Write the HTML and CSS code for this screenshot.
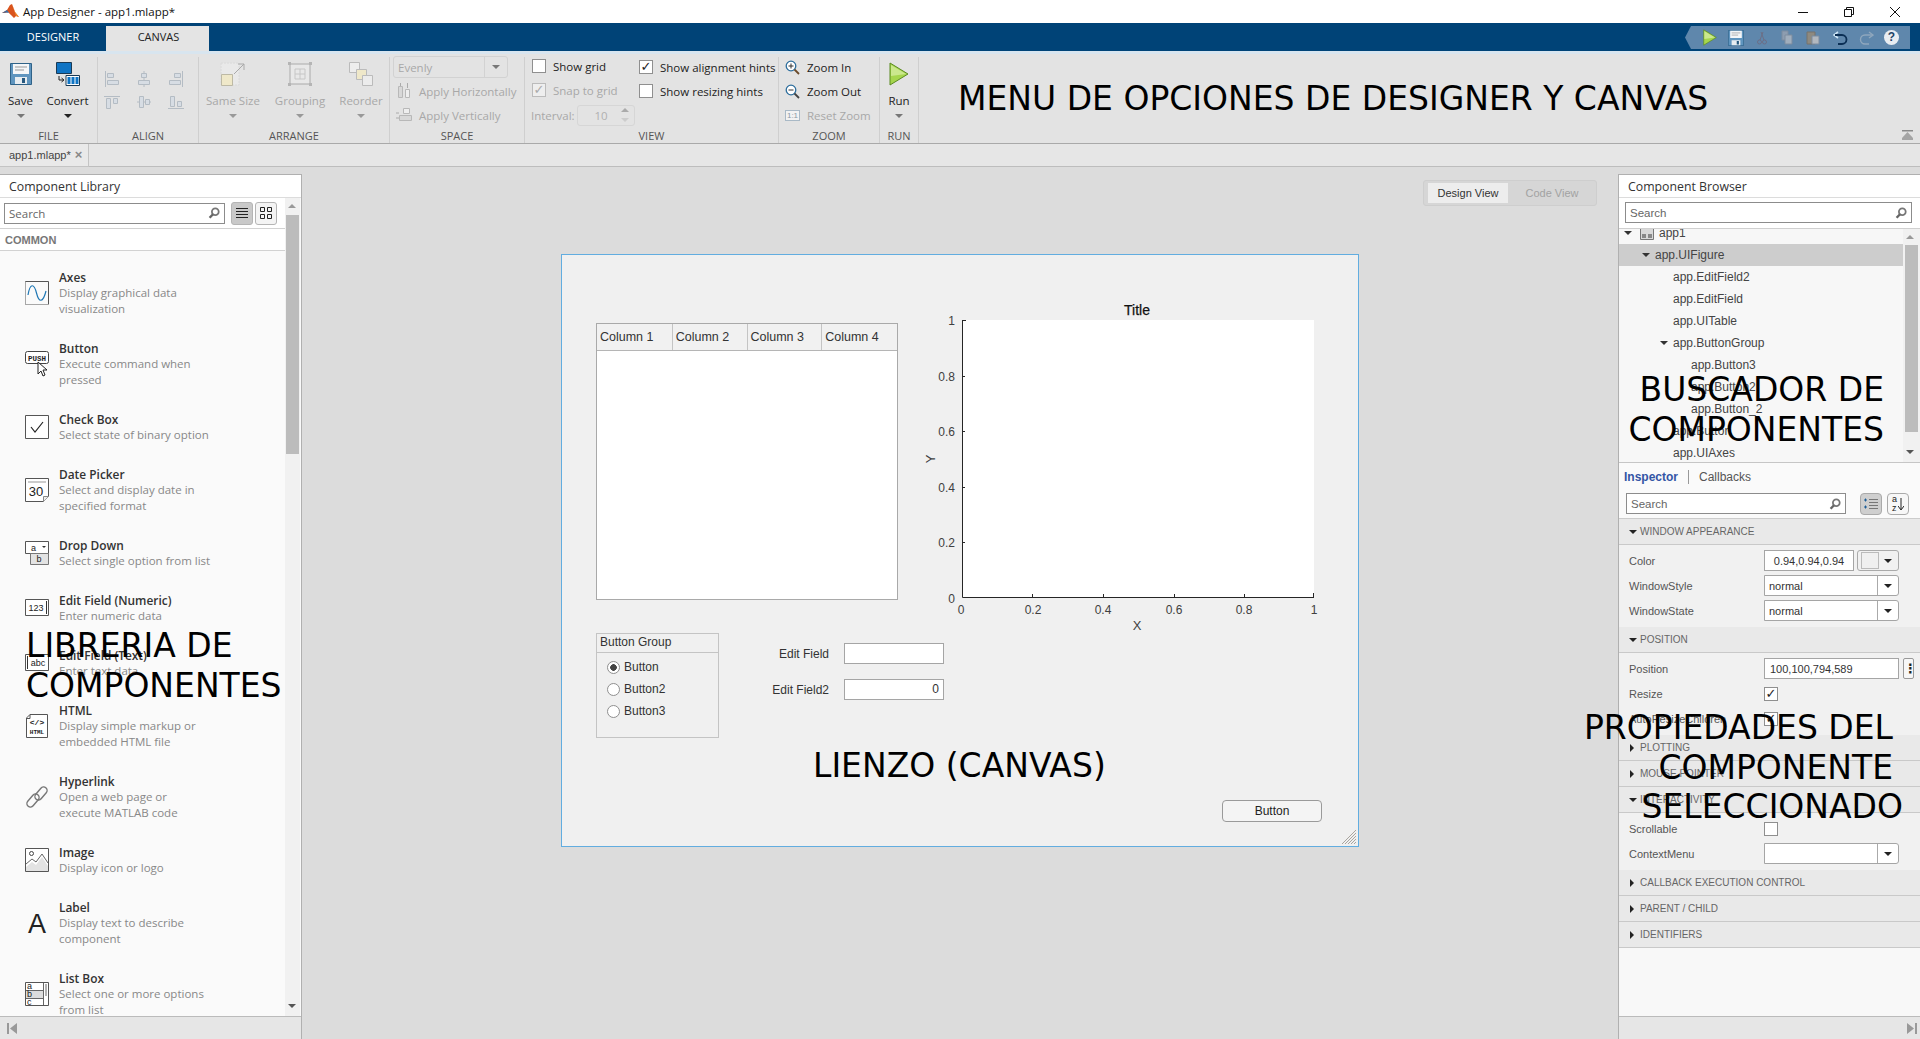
FILE: index.html
```html
<!DOCTYPE html>
<html lang="en">
<head>
    <meta charset="UTF-8">
    <title>App Designer - app1.mlapp*</title>
    <link rel="stylesheet" href="styles.css">
</head>
<body>

<svg class="defs" width="0" height="0">
    <defs>
        <symbol id="i-search" viewBox="0 0 12 12">
            <circle cx="7.3" cy="4.7" r="3.4" fill="none" stroke="#777" stroke-width="1.8"/>
            <path d="M5 7.2 1.6 10.8" stroke="#666" stroke-width="2.4"/>
        </symbol>
        <symbol id="i-save" viewBox="0 0 22 22">
            <path d="M.5.500h21v21H.5z" fill="#5f95bf" stroke="#2f6288"/>
            <path d="M3 1h16v10H3z" fill="#f4f6f8"/>
            <path d="M5 4h12M5 7h9" stroke="#999"/>
            <path d="M5 14h12v7H5z" fill="#e8edf1"/>
            <path d="M12 15h3v5h-3z" fill="#27597f"/>
        </symbol>
        <symbol id="i-play" viewBox="0 0 20 24">
            <path d="M1 1 19 12 1 23z" fill="#a6d64d" stroke="#5b8a22"/>
            <path d="M2 3 17 12 2 14z" fill="#cbe88d"/>
        </symbol>
    </defs>
</svg>

<header class="titlebar">
    <svg class="logo" width="17" height="15" viewBox="0 0 17 15">
        <path d="M0 9 5 6 8 1l2-1 3 8 4 5-3-1-2 2-3-3-3-3-3 1z" fill="#d9541e"/>
        <path d="M0 9 5 6l2 3-3-.5z" fill="#3b6ea5"/>
        <path d="m10 0 3 8 4 5-3-1-2-6z" fill="#f08a24"/>
    </svg>
    <span class="title-text">App Designer - app1.mlapp*</span>
    <div class="winbtns">
        <svg width="12" height="12" viewBox="0 0 12 12"><path d="M1 6.500h10" stroke="#111"/></svg>
        <svg width="12" height="12" viewBox="0 0 12 12"><path d="M1.500 3.500h7v7h-7zM3.500 3.500v-2h7v7h-2" fill="none" stroke="#111"/></svg>
        <svg width="12" height="12" viewBox="0 0 12 12"><path d="m1 1 10 10M11 1 1 11" stroke="#111"/></svg>
    </div>
</header>

<nav class="tabbar">
    <div class="tab">DESIGNER</div>
    <div class="tab tab-on">CANVAS</div>
    <div class="quick">
        <svg class="q-play" width="14" height="17"><use href="#i-play"/></svg>
        <svg class="q-save" width="16" height="16"><use href="#i-save"/></svg>
        <svg class="q-dim" width="12" height="14" viewBox="0 0 12 14"><path d="M7 1 4 9M5 1l3 8" stroke="#6c6f86" fill="none"/><circle cx="3.500" cy="11" r="2" fill="none" stroke="#6c6f86"/><circle cx="8.500" cy="11" r="2" fill="none" stroke="#6c6f86"/></svg>
        <svg class="q-dim" width="12" height="15" viewBox="0 0 12 15"><path d="M1 1h6v9H1z" fill="#8d9db0" stroke="#7c8c9f"/><path d="M4 5h7v9H4z" fill="#a0aebd" stroke="#7c8c9f"/></svg>
        <svg class="q-dim" width="14" height="15" viewBox="0 0 14 15"><path d="M1 2h8v12H1z" fill="#8e8a80" stroke="#77736c"/><path d="M6 6h7v8H6z" fill="#b2b8bf" stroke="#7c8c9f"/></svg>
        <svg class="q-undo" width="15" height="14" viewBox="0 0 15 14"><path d="M5 1 1 4l4 3" fill="none" stroke="#cfe6f7" stroke-width="1.600"/><path d="M2 4h7a4 4 0 0 1 0 9H5" fill="none" stroke="#0b2f55" stroke-width="1.800"/></svg>
        <svg class="q-redo" width="15" height="14" viewBox="0 0 15 14"><path d="M10 1l4 3-4 3" fill="none" stroke="#8fa7bd" stroke-width="1.400"/><path d="M13 4H6a4 4 0 0 0 0 9h4" fill="none" stroke="#8fa7bd" stroke-width="1.400"/></svg>
        <span class="q-help">?</span>
    </div>
</nav>

<section class="toolstrip">
    <div class="sec sec-file">
        <div class="sec-body">
            <div class="big big-save">
                <svg width="22" height="22"><use href="#i-save"/></svg>
                <span>Save</span><i class="caret caret-soft"></i>
            </div>
            <div class="big big-convert">
                <svg width="24" height="24" viewBox="0 0 24 24">
                    <path d="M.5.500h15v11H.5z" fill="#0f74c4" stroke="#1a3a55"/>
                    <path d="M10 13.500h13.500v10H10z" fill="#fff" stroke="#1a3a55"/>
                    <path d="M11.500 15h3v7h-3zM15.500 15h3v7h-3zM19.500 15h3v7h-3z" fill="#0f74c4"/>
                    <path d="M3 14v4h4M5.500 16 8 18l-2.500 2" fill="none" stroke="#222"/>
                </svg>
                <span>Convert</span><i class="caret"></i>
            </div>
        </div>
        <div class="sec-label">FILE</div>
    </div>

    <div class="sec sec-align">
        <div class="sec-body align-grid">
            <svg width="14" height="16" viewBox="0 0 14 16"><path d="M.5 0v16" stroke="#b4bcc4"/><path d="M2.500 2.500h6v4h-6zM2.500 9.500h11v4h-11z" fill="#d7dde4" stroke="#b4bcc4"/></svg>
            <svg width="14" height="16" viewBox="0 0 14 16"><path d="M7 0v16" stroke="#b4bcc4"/><path d="M4.500 2.500h5v4h-5zM1.500 9.500h11v4h-11z" fill="#d7dde4" stroke="#b4bcc4"/></svg>
            <svg width="14" height="16" viewBox="0 0 14 16"><path d="M13.500 0v16" stroke="#b4bcc4"/><path d="M5.500 2.500h6v4h-6zM.5 9.500h11v4H.5z" fill="#d7dde4" stroke="#b4bcc4"/></svg>
            <svg width="16" height="13" viewBox="0 0 16 13"><path d="M0 .5h16" stroke="#b4bcc4"/><path d="M2.500 2.500h4v10h-4zM9.500 2.500h4v5h-4z" fill="#d7dde4" stroke="#b4bcc4"/></svg>
            <svg width="14" height="14" viewBox="0 0 14 14"><path d="M0 7h14" stroke="#b4bcc4"/><path d="M2.500 1.500h4v11h-4zM8.500 4.500h4v5h-4z" fill="#d7dde4" stroke="#b4bcc4"/></svg>
            <svg width="16" height="13" viewBox="0 0 16 13"><path d="M0 12.500h16" stroke="#b4bcc4"/><path d="M2.500.5h4v10h-4zM9.500 5.500h4v5h-4z" fill="#d7dde4" stroke="#b4bcc4"/></svg>
        </div>
        <div class="sec-label">ALIGN</div>
    </div>

    <div class="sec sec-arrange">
        <div class="sec-body">
            <div class="big big-same dim">
                <svg width="26" height="24" viewBox="0 0 26 24">
                    <path d="M1 1h18v22H1z" fill="#e9e9e9" stroke="#dadada" stroke-dasharray="2 1"/>
                    <path d="M1.500 12.500h11v11h-11z" fill="#efe8c9" stroke="#bdb9a5"/>
                    <path d="M14 12 24 2M18 2h6v6" fill="none" stroke="#a9a9a9"/>
                </svg>
                <span>Same Size</span><i class="caret caret-soft"></i>
            </div>
            <div class="big big-group dim">
                <svg width="24" height="24" viewBox="0 0 24 24">
                    <path d="M2 2h20v20H2z" fill="#e8e8e8" stroke="#aaa"/>
                    <path d="M7 7h10v10H7zM12 7v10M7 12h10" fill="none" stroke="#c6c6c6"/>
                    <path d="M0 0h3v3H0zM21 0h3v3h-3zM0 21h3v3H0zM21 21h3v3h-3z" fill="#b5b5b5"/>
                </svg>
                <span>Grouping</span><i class="caret caret-soft"></i>
            </div>
            <div class="big big-reorder dim">
                <svg width="24" height="24" viewBox="0 0 24 24">
                    <path d="M.5.500h10v10H.5z" fill="#ededed" stroke="#bbb"/>
                    <path d="M7.500 7.500h10v10h-10z" fill="#efe8c9" stroke="#bbb"/>
                    <path d="M13.500 13.500h10v10h-10z" fill="#ececec" stroke="#bbb"/>
                </svg>
                <span>Reorder</span><i class="caret caret-soft"></i>
            </div>
        </div>
        <div class="sec-label">ARRANGE</div>
    </div>

    <div class="sec sec-space">
        <div class="sec-body stack">
            <div class="combo-evenly"><span>Evenly</span><b><i class="caret caret-soft"></i></b></div>
            <div class="tool-row dim">
                <svg width="16" height="16" viewBox="0 0 16 16"><path d="M4.500 0v3M11.500 0v5" stroke="#aaa"/><path d="M2.500 3.500h4v11h-4z" fill="#d8d8d8" stroke="#b8b8b8"/><path d="M9.500 6.500h4v8h-4z" fill="#eee" stroke="#b8b8b8"/></svg>
                <span>Apply Horizontally</span>
            </div>
            <div class="tool-row dim">
                <svg width="16" height="16" viewBox="0 0 16 16"><path d="M0 6h3M0 11h3" stroke="#aaa"/><path d="M7.500 1.500h6v5h-6z" fill="#eee" stroke="#b8b8b8"/><path d="M3.500 8.500h12v5h-12z" fill="#d8d8d8" stroke="#b8b8b8"/></svg>
                <span>Apply Vertically</span>
            </div>
        </div>
        <div class="sec-label">SPACE</div>
    </div>

    <div class="sec sec-view">
        <div class="sec-body view-cols">
            <div class="stack view-left">
                <label class="tool-row"><i class="cbx"></i><span>Show grid</span></label>
                <label class="tool-row dim"><i class="cbx cbx-dim">&#10003;</i><span>Snap to grid</span></label>
                <div class="tool-row dim row-interval">
                    <span>Interval:</span>
                    <div class="spin"><span>10</span><em></em></div>
                </div>
            </div>
            <div class="stack view-right">
                <label class="tool-row"><i class="cbx">&#10003;</i><span>Show alignment hints</span></label>
                <label class="tool-row"><i class="cbx"></i><span>Show resizing hints</span></label>
            </div>
        </div>
        <div class="sec-label">VIEW</div>
    </div>

    <div class="sec sec-zoom">
        <div class="sec-body stack">
            <div class="tool-row">
                <svg width="15" height="15" viewBox="0 0 15 15"><circle cx="6" cy="6" r="4.800" fill="#fff" stroke="#2c6d9c" stroke-width="1.300"/><path d="M3.500 6h5M6 3.500v5" stroke="#333"/><path d="m9.500 9.500 4.500 4.500" stroke="#6b4a2a" stroke-width="1.800"/></svg>
                <span>Zoom In</span>
            </div>
            <div class="tool-row">
                <svg width="15" height="15" viewBox="0 0 15 15"><circle cx="6" cy="6" r="4.800" fill="#fff" stroke="#2c6d9c" stroke-width="1.300"/><path d="M3.500 6h5" stroke="#333"/><path d="m9.500 9.500 4.500 4.500" stroke="#444" stroke-width="1.800"/></svg>
                <span>Zoom Out</span>
            </div>
            <div class="tool-row dim">
                <span class="one-one">1:1</span>
                <span>Reset Zoom</span>
            </div>
        </div>
        <div class="sec-label">ZOOM</div>
    </div>

    <div class="sec sec-run">
        <div class="sec-body">
            <div class="big big-run">
                <svg width="20" height="23"><use href="#i-play"/></svg>
                <span>Run</span><i class="caret caret-soft"></i>
            </div>
        </div>
        <div class="sec-label">RUN</div>
    </div>

    <svg class="collapse" width="11" height="11" viewBox="0 0 11 11"><path d="M0 .5h11" stroke="#8a8a8a" stroke-width="2"/><path d="M5.500 2 0 8v2h11V8z" fill="#a5a5a5"/></svg>
</section>

<div class="docbar">
    <div class="doctab">app1.mlapp*<span class="doc-x">&#215;</span></div>
</div>

<main class="workspace">

    <aside class="panel lib">
        <div class="panel-title">Component Library</div>
        <div class="lib-body">
            <div class="lib-main">
                <div class="lib-tools">
                    <div class="search search-lib">Search<svg width="12" height="12"><use href="#i-search"/></svg></div>
                    <div class="view-btn view-btn-on">
                        <svg width="12" height="12" viewBox="0 0 12 12"><path d="M0 1.500h12M0 4.500h12M0 7.500h12M0 10.500h12" stroke="#222"/></svg>
                    </div>
                    <div class="view-btn">
                        <svg width="12" height="12" viewBox="0 0 12 12"><path d="M.5.500h4v4h-4zM7.500.500h4v4h-4zM.5 7.500h4v4h-4zM7.500 7.500h4v4h-4z" fill="none" stroke="#222"/></svg>
                    </div>
                </div>
                <div class="lib-cat">COMMON</div>
                <div class="lib-list">
                    <div class="item">
                        <svg width="24" height="24" viewBox="0 0 24 24"><path d="M.5.500h23" stroke="#555"/><path d="M.5.500v23h23" fill="none" stroke="#555" stroke-dasharray="1 1"/><path d="M23.500.500v23" stroke="#555"/><path d="M3 14C5 2 9 2 11.500 12S18 22 21 10" fill="none" stroke="#1f77b4" stroke-width="1.200"/></svg>
                        <div class="item-text"><b>Axes</b><p>Display graphical data<br>visualization</p></div>
                    </div>
                    <div class="item">
                        <svg width="24" height="28" viewBox="0 0 24 28"><rect x=".5" y="1.500" width="23" height="12" rx="2" fill="#fff" stroke="#444"/><text x="12" y="10.500" class="ic-push">PUSH</text><path d="M13 12v12l3-3 2 5 2-1-2-5h4z" fill="#fff" stroke="#222"/></svg>
                        <div class="item-text"><b>Button</b><p>Execute command when<br>pressed</p></div>
                    </div>
                    <div class="item">
                        <svg width="24" height="24" viewBox="0 0 24 24"><path d="M.5.500h23v23H.5z" fill="#fff" stroke="#555"/><path d="m6 12 4 5 8-10" fill="none" stroke="#222" stroke-width="1.200"/></svg>
                        <div class="item-text"><b>Check Box</b><p>Select state of binary option</p></div>
                    </div>
                    <div class="item">
                        <svg width="24" height="24" viewBox="0 0 24 24"><path d="M.5.500h23v18l-5 5H.5z" fill="#fff" stroke="#555"/><path d="M3 4h18" stroke="#999"/><path d="M18.500 23.500v-5h5" fill="#eee" stroke="#888"/><text x="11" y="18" class="ic-date">30</text></svg>
                        <div class="item-text"><b>Date Picker</b><p>Select and display date in<br>specified format</p></div>
                    </div>
                    <div class="item">
                        <svg width="24" height="24" viewBox="0 0 24 24"><path d="M.5.500h23v12H.5z" fill="#fff" stroke="#555"/><path d="M5.500 12.500h18v11h-18z" fill="#e3e3e3" stroke="#777"/><text x="6" y="10" class="ic-small">a</text><path d="m17 5 2 2 2-2z" fill="#333"/><text x="11.500" y="21" class="ic-small">b</text></svg>
                        <div class="item-text"><b>Drop Down</b><p>Select single option from list</p></div>
                    </div>
                    <div class="item">
                        <svg width="24" height="24" viewBox="0 0 24 24"><path d="M.5 3.500h23v16H.5z" fill="#fff" stroke="#555"/><text x="11" y="15" class="ic-num">123</text><path d="M21.500 5v13" stroke="#333"/></svg>
                        <div class="item-text"><b>Edit Field (Numeric)</b><p>Enter numeric data</p></div>
                    </div>
                    <div class="item">
                        <svg width="24" height="24" viewBox="0 0 24 24"><path d="M.5 3.500h23v16H.5z" fill="#fff" stroke="#555"/><path d="M2.500 5v13" stroke="#333"/><text x="13" y="15" class="ic-num">abc</text></svg>
                        <div class="item-text"><b>Edit Field (Text)</b><p>Enter text data</p></div>
                    </div>
                    <div class="item">
                        <svg width="24" height="24" viewBox="0 0 24 24"><path d="M5 .5h17.500v23H1.500V4z" fill="#fff" stroke="#555"/><path d="M1.500 4.500H5V.5" fill="none" stroke="#555"/><text x="12" y="11" class="ic-html">&lt;/&gt;</text><text x="12" y="20" class="ic-html ic-html-sm">HTML</text></svg>
                        <div class="item-text"><b>HTML</b><p>Display simple markup or<br>embedded HTML file</p></div>
                    </div>
                    <div class="item">
                        <svg width="24" height="24" viewBox="0 0 24 24"><g fill="none" stroke="#777" stroke-width="1.400"><rect x="-3.500" y="-7.500" width="7" height="15" rx="3.500" transform="translate(8 15.500) rotate(40)"/><rect x="-3.500" y="-7.500" width="7" height="15" rx="3.500" transform="translate(16 8.500) rotate(40)"/></g></svg>
                        <div class="item-text"><b>Hyperlink</b><p>Open a web page or<br>execute MATLAB code</p></div>
                    </div>
                    <div class="item">
                        <svg width="24" height="24" viewBox="0 0 24 24"><path d="M.5.500h23v23H.5z" fill="#fff" stroke="#555"/><path d="m1 19 6-5 4 3 6-8 6 9v5H1z" fill="#e3e3e3"/><path d="m1 16 6-5 4 3 6-8 6 9" fill="none" stroke="#666"/><circle cx="6.500" cy="5.500" r="2" fill="none" stroke="#444"/></svg>
                        <div class="item-text"><b>Image</b><p>Display icon or logo</p></div>
                    </div>
                    <div class="item">
                        <svg width="24" height="24" viewBox="0 0 24 24"><text x="12" y="22" class="ic-label">A</text></svg>
                        <div class="item-text"><b>Label</b><p>Display text to describe<br>component</p></div>
                    </div>
                    <div class="item">
                        <svg width="24" height="24" viewBox="0 0 24 24"><path d="M.5.500h23v23H.5z" fill="#fff" stroke="#555"/><path d="M1 9h17v7H1z" fill="#ddd"/><path d="M1 8.500h17M1 16.500h17M18.500 1v22M21 2v12" stroke="#666"/><text x="2" y="7" class="ic-small">a</text><text x="2" y="15" class="ic-small">b</text><text x="2" y="22.500" class="ic-small">c</text></svg>
                        <div class="item-text"><b>List Box</b><p>Select one or more options<br>from list</p></div>
                    </div>
                </div>
            </div>
            <div class="vscroll vscroll-lib"><i class="arr-up"></i><div class="thumb"></div><i class="arr-down"></i></div>
        </div>
        <div class="panel-foot">
            <svg width="11" height="11" viewBox="0 0 11 11"><path d="M1 0h2v11H1zM11 0v11L4 5.500z" fill="#999"/></svg>
        </div>
    </aside>

    <div class="center">
        <div class="view-switch">
            <span class="vs vs-on">Design View</span>
            <span class="vs">Code View</span>
        </div>

        <div class="figure">
            <div class="ui-table">
                <div class="thead">
                    <span>Column 1</span><span>Column 2</span><span>Column 3</span><span>Column 4</span>
                </div>
            </div>

            <svg class="ui-axes" width="420" height="340" viewBox="0 -15 420 340">
                <rect x="46" y="5" width="352" height="277" fill="#fff"/>
                <path d="M46.500 5v277.500H398" fill="none" stroke="#262626"/>
                <path d="M46 5.500h4M46 61.500h3M46 116.500h3M46 172.500h3M46 227.500h3M116.500 282v-3M187.500 282v-3M258.500 282v-3M328.500 282v-3M397.500 282v-4" stroke="#262626"/>
                <text x="221" y="0" class="ax-title">Title</text>
                <g class="ax-y">
                    <text x="39" y="10">1</text><text x="39" y="66">0.8</text><text x="39" y="121">0.6</text>
                    <text x="39" y="177">0.4</text><text x="39" y="232">0.2</text><text x="39" y="288">0</text>
                </g>
                <g class="ax-x">
                    <text x="45" y="299">0</text><text x="117" y="299">0.2</text><text x="187" y="299">0.4</text>
                    <text x="258" y="299">0.6</text><text x="328" y="299">0.8</text><text x="398" y="299">1</text>
                    <text x="221" y="315" class="ax-name">X</text>
                </g>
                <text class="ax-name" transform="translate(19 144) rotate(-90)">Y</text>
            </svg>

            <div class="ui-group">
                <div class="group-title">Button Group</div>
                <div class="radio"><i class="dot dot-on"></i>Button</div>
                <div class="radio"><i class="dot"></i>Button2</div>
                <div class="radio"><i class="dot"></i>Button3</div>
            </div>

            <div class="ui-fields">
                <div class="ui-field"><label>Edit Field</label><div class="ui-input"></div></div>
                <div class="ui-field"><label>Edit Field2</label><div class="ui-input">0</div></div>
            </div>

            <div class="ui-button">Button</div>

            <svg class="grip" width="14" height="14" viewBox="0 0 14 14"><path d="M14 0 0 14M14 3 3 14M14 6 6 14M14 9l-5 5M14 12l-2 2" stroke="#a9a59f"/></svg>
        </div>
    </div>

    <aside class="panel browser">
        <div class="panel-title">Component Browser</div>
        <div class="browser-search">
            <div class="search">Search<svg width="12" height="12"><use href="#i-search"/></svg></div>
        </div>
        <div class="tree-wrap">
            <div class="tree">
                <div class="node lvl0"><i class="tw"></i><svg class="tree-ic" width="14" height="13" viewBox="0 0 14 13"><path d="M.5.500h13v12H.5z" fill="#d9d9d9" stroke="#777"/><path d="M2 7h4v4H2zM8 7h4v4H8z" fill="#888"/></svg>app1</div>
                <div class="node lvl1 node-on"><i class="tw"></i>app.UIFigure</div>
                <div class="node lvl2">app.EditField2</div>
                <div class="node lvl2">app.EditField</div>
                <div class="node lvl2">app.UITable</div>
                <div class="node has-tw"><i class="tw"></i>app.ButtonGroup</div>
                <div class="node lvl3">app.Button3</div>
                <div class="node lvl3">app.Button2</div>
                <div class="node lvl3">app.Button_2</div>
                <div class="node lvl2">app.Button</div>
                <div class="node lvl2">app.UIAxes</div>
            </div>
            <div class="vscroll vscroll-tree"><i class="arr-up"></i><div class="thumb"></div><i class="arr-down"></i></div>
        </div>

        <div class="insp-tabs">
            <span class="insp-on">Inspector</span><i class="insp-sep"></i><span>Callbacks</span>
        </div>
        <div class="insp-tools">
            <div class="search">Search<svg width="12" height="12"><use href="#i-search"/></svg></div>
            <div class="sort-btn sort-on">
                <svg width="14" height="14" viewBox="0 0 14 14"><path d="M5 2.500h9M5 5.500h9M5 8.500h9M5 11.500h9" stroke="#777"/><path d="M0 3h3M1.500 1.500v3M0 10h3M1.500 8.500v3" stroke="#1c5d96"/></svg>
            </div>
            <div class="sort-btn">
                <span class="az">a<br>z</span>
                <svg width="6" height="14" viewBox="0 0 6 14"><path d="M3 1v11M0 9l3 4 3-4" fill="none" stroke="#222"/></svg>
            </div>
        </div>

        <div class="props">
            <div class="sect-head open">WINDOW APPEARANCE</div>
            <div class="sect-body">
                <div class="prop"><label>Color</label>
                    <div class="val val-color">0.94,0.94,0.94</div>
                    <div class="color-btn"><i class="swatch"></i><i class="caret"></i></div>
                </div>
                <div class="prop"><label>WindowStyle</label>
                    <div class="val val-drop"><span>normal</span><b><i class="caret"></i></b></div>
                </div>
                <div class="prop"><label>WindowState</label>
                    <div class="val val-drop"><span>normal</span><b><i class="caret"></i></b></div>
                </div>
            </div>
            <div class="sect-head open">POSITION</div>
            <div class="sect-body">
                <div class="prop"><label>Position</label>
                    <div class="val val-pos">100,100,794,589</div>
                    <div class="dots">&#8942;</div>
                </div>
                <div class="prop"><label>Resize</label><i class="cbx">&#10003;</i></div>
                <div class="prop"><label>AutoResizeChildren</label><i class="cbx">&#10003;</i></div>
            </div>
            <div class="sect-head">PLOTTING</div>
            <div class="sect-head">MOUSE POINTER</div>
            <div class="sect-head open">INTERACTIVITY</div>
            <div class="sect-body">
                <div class="prop"><label>Scrollable</label><i class="cbx"></i></div>
                <div class="prop"><label>ContextMenu</label>
                    <div class="val val-drop"><span></span><b><i class="caret"></i></b></div>
                </div>
            </div>
            <div class="sect-head">CALLBACK EXECUTION CONTROL</div>
            <div class="sect-head">PARENT / CHILD</div>
            <div class="sect-head">IDENTIFIERS</div>
        </div>
        <div class="panel-foot foot-right">
            <svg width="11" height="11" viewBox="0 0 11 11"><path d="M8 0h2v11H8zM0 0v11l7-5.500z" fill="#999"/></svg>
        </div>
    </aside>
</main>

<div class="note note-menu">MENU DE OPCIONES DE DESIGNER Y CANVAS</div>
<div class="note note-lib">LIBRERIA DE<br>COMPONENTES</div>
<div class="note note-browser">BUSCADOR DE<br>COMPONENTES</div>
<div class="note note-canvas">LIENZO (CANVAS)</div>
<div class="note note-props">
    <div class="np1">PROPIEDADES DEL</div>
    <div class="np2">COMPONENTE</div>
    <div class="np3">SELECCIONADO</div>
</div>

</body>
</html>
```

FILE: styles.css
```css
*{
    box-sizing: border-box;
}
html,body{
    margin: 0;
    height: 100%;
}
body{
    width: 1920px;
    height: 1039px;
    overflow: hidden;
    position: relative;
    display: flex;
    flex-direction: column;
    background: #dcdcdc;
    font-family: "Open Sans", "Liberation Sans", sans-serif;
    font-size: 11.5px;
    color: #222;
}
p{
    margin: 0;
}
i,em{
    font-style: normal;
}
svg{
    display: block;
    flex: none;
}
.defs{
    position: absolute;
}

/* title bar */
.titlebar{
    height: 23px;
    flex: none;
    background: #fff;
    display: flex;
    align-items: center;
    padding-left: 2px;
    font-size: 11.5px;
    color: #111;
}
.title-text{
    margin-left: 4px;
}
.winbtns{
    margin-left: auto;
    display: flex;
    gap: 34px;
    padding-right: 19px;
}

/* tabs */
.tabbar{
    height: 28px;
    flex: none;
    background: #004377;
    display: flex;
    padding-top: 3px;
    position: relative;
}
.tab{
    width: 106px;
    padding-top: 3px;
    text-align: center;
    font-size: 11px;
    color: #fff;
}
.tab-on{
    width: 103px;
    padding-left: 2px;
    background: #e4e4e4;
    color: #222;
}
.quick{
    margin: 0 10px 2px auto;
    width: 225px;
    padding-left: 18px;
    display: flex;
    align-items: center;
    background: #5f87ac;
    clip-path: polygon(6px 0, 100% 0, 100% 100%, 6px 100%, 0 50%);
}
.q-play{
    margin-right: 11px;
}
.q-save{
    margin-right: 12px;
}
.quick .q-dim{
    margin-right: 13px;
}
.quick .q-undo{
    margin-right: 11px;
}
.quick .q-redo{
    margin-right: 10px;
}
.q-help{
    width: 15px;
    height: 15px;
    border-radius: 50%;
    background: #e9edf2;
    color: #1d4468;
    font: bold 12px/15px "Liberation Sans", sans-serif;
    text-align: center;
}

/* toolstrip */
.toolstrip{
    height: 93px;
    flex: none;
    background: #e3e3e3;
    border-top: 3px solid #d8e5ef;
    border-bottom: 1px solid #a9a9a9;
    display: flex;
    position: relative;
}
.sec{
    display: flex;
    flex-direction: column;
    border-right: 1px solid #cfcfcf;
    margin-top: 3px;
    flex: none;
}
.sec-file{width: 98px;}
.sec-align{width: 101px;}
.sec-arrange{width: 191px;}
.sec-space{width: 135px;}
.sec-view{width: 254px;}
.sec-zoom{width: 101px;}
.sec-run{width: 39px;}
.sec-body{
    flex: 1;
    display: flex;
    margin-top: -3px;
    min-height: 0;
}
.sec-label{
    height: 14px;
    line-height: 14px;
    text-align: center;
    font-size: 11px;
    color: #555;
}
.big{
    display: flex;
    flex-direction: column;
    align-items: center;
    padding-top: 8px;
}
.big svg{
    height: 24px;
}
.big span{
    margin-top: 7px;
    line-height: 16px;
    white-space: nowrap;
}
.big-save{width: 41px;}
.big-convert{width: 53px;}
.big-same{width: 68px;}
.big-group{width: 66px;}
.big-reorder{width: 56px;}
.big-run{width: 38px;}
.caret{
    display: block;
    width: 0;
    height: 0;
    border-left: 4px solid transparent;
    border-right: 4px solid transparent;
    border-top: 4px solid #222;
}
.big .caret{
    margin-top: 5px;
}
.caret-soft{
    border-top-color: #777;
}
.dim{
    color: #a8a8a8;
}
.dim .caret{
    border-top-color: #999;
}
.align-grid{
    display: grid;
    grid-template-columns: repeat(3, 32px);
    grid-template-rows: 24px 22px;
    justify-items: center;
    align-items: center;
    justify-content: center;
    align-content: start;
    padding: 13px 8px 0 0;
}
.stack{
    flex-direction: column;
    padding-top: 1px;
}
.tool-row{
    height: 24px;
    display: flex;
    align-items: center;
    gap: 7px;
    white-space: nowrap;
}
.sec-zoom .tool-row{
    padding-left: 6px;
}
.sec-space .tool-row{
    padding-left: 6px;
}
.combo-evenly{
    margin: 1px 0 1px 3px;
    width: 115px;
    height: 22px;
    border: 1px solid #d2d2d2;
    border-radius: 3px;
    display: flex;
    align-items: center;
    padding-left: 4px;
    color: #a8a8a8;
}
.combo-evenly span{
    flex: 1;
}
.combo-evenly b{
    width: 23px;
    height: 100%;
    border-left: 1px solid #d2d2d2;
    display: flex;
    align-items: center;
    justify-content: center;
}
.view-cols{
    padding-left: 7px;
}
.view-left{
    display: flex;
    width: 107px;
    padding-top: 0;
}
.view-right{
    display: flex;
}
.row-interval{
    margin-top: 1px;
    margin-left: -1px;
}
.cbx{
    width: 14px;
    height: 14px;
    flex: none;
    display: block;
    background: #fff;
    border: 1px solid #8f8f8f;
    font: normal 13px/12px "DejaVu Sans", sans-serif;
    text-align: center;
    color: #222;
}
.cbx-dim{
    background: #eee;
    border-color: #bbb;
    color: #aaa;
}
.spin{
    margin-left: -5px;
    width: 58px;
    height: 21px;
    border: 1px solid #d6d6d6;
    border-radius: 3px;
    display: flex;
    align-items: center;
    justify-content: flex-end;
    gap: 13px;
    padding-right: 5px;
    color: #b0b0b0;
}
.spin em{
    width: 8px;
    height: 14px;
    position: relative;
}
.spin em::before,.spin em::after{
    content: "";
    position: absolute;
    left: 0;
    border-left: 4px solid transparent;
    border-right: 4px solid transparent;
}
.spin em::before{
    top: 0;
    border-bottom: 4px solid #aaa;
}
.spin em::after{
    bottom: 0;
    border-top: 4px solid #ccc;
}
.one-one{
    width: 15px;
    height: 11px;
    border: 1px solid #a9b9c6;
    background: #f2f2f2;
    font: 8px/9px "Liberation Sans", sans-serif;
    text-align: center;
    color: #8a9aa6;
}
.collapse{
    position: absolute;
    right: 7px;
    top: 76px;
}

/* doc tabs */
.docbar{
    height: 23px;
    flex: none;
    background: #e6e6e6;
    border-bottom: 1px solid #bdbdbd;
}
.doctab{
    width: 89px;
    height: 23px;
    padding-left: 9px;
    font: 11px/21px "Liberation Sans", sans-serif;
    background: #e9e9e9;
    border-right: 1px solid #c4c4c4;
    border-bottom: 1px solid #c4c4c4;
    color: #444;
    white-space: nowrap;
}
.doc-x{
    color: #888;
    font-size: 13px;
    font-weight: bold;
    margin-left: 4px;
}

/* main area */
.workspace{
    flex: 1;
    min-height: 0;
    display: flex;
}
.panel{
    margin-top: 7px;
    flex: none;
    display: flex;
    flex-direction: column;
    background: #fff;
    border: 1px solid #b0b0b0;
    border-bottom: 0;
}
.panel-title{
    height: 23px;
    flex: none;
    padding-left: 9px;
    line-height: 23px;
    font-size: 12.3px;
    border-bottom: 1px solid #dcdcdc;
    color: #333;
}
.panel-foot{
    height: 23px;
    flex: none;
    background: #e6e6e6;
    border-top: 1px solid #bbb;
    padding: 6px 0 0 6px;
}
.foot-right{
    display: flex;
    justify-content: flex-end;
    padding-right: 2px;
}

/* component library */
.lib{
    width: 302px;
    border-left: 0;
}
.lib-body{
    flex: 1;
    min-height: 0;
    display: flex;
    background: #fafafa;
}
.lib-main{
    width: 285px;
    display: flex;
    flex-direction: column;
}
.lib-tools{
    height: 30px;
    flex: none;
    background: #fff;
    display: flex;
    align-items: center;
    padding: 0 8px 0 4px;
    gap: 2px;
}
.search{
    flex: 1;
    height: 21px;
    background: #fff;
    border: 1px solid #8c8c8c;
    padding: 0 4px;
    display: flex;
    align-items: center;
    justify-content: space-between;
    color: #666;
    font-family: "Open Sans", "Liberation Sans", sans-serif;
    font-size: 11.5px;
}
.search-lib{
    margin-right: 4px;
}
.view-btn{
    width: 22px;
    height: 23px;
    border: 1px solid #b5b5b5;
    border-radius: 3px;
    background: #f4f4f4;
    display: flex;
    align-items: center;
    justify-content: center;
}
.view-btn-on{
    background: #c9c9c9;
}
.lib-cat{
    height: 23px;
    flex: none;
    background: #fff;
    border-top: 1px solid #d2d2d2;
    border-bottom: 1px solid #d2d2d2;
    padding-left: 5px;
    font: bold 11px/23px "Liberation Sans", sans-serif;
    color: #777;
}
.lib-list{
    flex: 1;
    min-height: 0;
    overflow: hidden;
    padding-top: 7px;
}
.item{
    display: flex;
    align-items: center;
    padding: 11px 0 12px 25px;
    gap: 10px;
}
.item svg{
    overflow: visible;
}
.item-text{
    line-height: 16px;
    color: #888;
}
.item-text b{
    display: block;
    color: #333;
    font-size: 11.9px;
    font-weight: 600;
}
.ic-push{
    font: bold 7.5px "Liberation Mono", monospace;
    text-anchor: middle;
    fill: #222;
}
.ic-date{
    font: 13px "Liberation Sans", sans-serif;
    text-anchor: middle;
    fill: #222;
}
.ic-small{
    font: 9px "Liberation Sans", sans-serif;
    fill: #222;
}
.ic-num{
    font: 9px "Liberation Sans", sans-serif;
    text-anchor: middle;
    fill: #222;
}
.ic-html{
    font: bold 8px "Liberation Mono", monospace;
    text-anchor: middle;
    fill: #222;
}
.ic-html-sm{
    font-size: 6px;
}
.ic-label{
    font: 27px "Liberation Sans", sans-serif;
    text-anchor: middle;
    fill: #222;
}
.vscroll{
    width: 15px;
    flex: none;
    background: #f1f1f1;
    display: flex;
    flex-direction: column;
    align-items: center;
    position: relative;
}
.thumb{
    width: 13px;
    background: #bcbcbc;
}
.arr-up,.arr-down{
    position: absolute;
    left: 3px;
    border-left: 4px solid transparent;
    border-right: 4px solid transparent;
}
.arr-up{
    top: 6px;
    border-bottom: 4px solid #999;
}
.arr-down{
    bottom: 8px;
    border-top: 4px solid #555;
}
.vscroll-lib .thumb{
    margin-top: 17px;
    height: 239px;
}

/* center */
.center{
    flex: 1;
    min-width: 0;
    display: flex;
    flex-direction: column;
    align-items: center;
}
.view-switch{
    margin: 13px 21px 0 0;
    align-self: flex-end;
    width: 174px;
    height: 26px;
    background: #d6d6d6;
    border: 1px solid #cecece;
    border-radius: 3px;
    display: flex;
    align-items: center;
    padding-left: 4px;
    font: 11px "Liberation Sans", sans-serif;
}
.vs{
    width: 80px;
    height: 20px;
    line-height: 20px;
    text-align: center;
    color: #a2a2a2;
}
.vs-on{
    background: #ededed;
    color: #333;
    margin-right: 4px;
}
.figure{
    margin-top: 48px;
    width: 798px;
    height: 593px;
    flex: none;
    position: relative;
    background: #f0f0f0;
    border: 1px solid #62ade0;
    font: 12px "Liberation Sans", sans-serif;
    color: #333;
}
.ui-table{
    position: absolute;
    left: 34px;
    top: 68px;
    width: 302px;
    height: 277px;
    background: #fff;
    border: 1px solid #a9a9a9;
}
.thead{
    height: 27px;
    display: flex;
    background: #f1f1f1;
    border-bottom: 1px solid #b5b5b5;
    font-size: 12.5px;
}
.thead span{
    width: 75px;
    padding-left: 3px;
    line-height: 26px;
    border-right: 1px solid #c4c4c4;
}
.thead span:first-child{
    width: 76px;
}
.thead span:last-child{
    border-right: 0;
}
.ui-axes{
    position: absolute;
    left: 354px;
    top: 45px;
}
.ui-axes text{
    font: 12px "Liberation Sans", sans-serif;
    fill: #404040;
}
.ui-axes .ax-title{
    font-size: 14px;
    text-anchor: middle;
    fill: #111;
    stroke: #111;
    stroke-width: .25px;
}
.ax-y text{
    text-anchor: end;
}
.ax-x text{
    text-anchor: middle;
}
.ui-axes .ax-name{
    font-size: 13px;
    text-anchor: middle;
}
.ui-group{
    position: absolute;
    left: 34px;
    top: 378px;
    width: 123px;
    height: 105px;
    border: 1px solid #c4c4c4;
}
.group-title{
    height: 19px;
    padding-left: 3px;
    line-height: 17px;
    border-bottom: 1px solid #c4c4c4;
    margin-bottom: 3px;
}
.radio{
    height: 22px;
    display: flex;
    align-items: center;
    gap: 4px;
    padding-left: 10px;
}
.dot{
    width: 13px;
    height: 13px;
    border-radius: 50%;
    background: #fff;
    border: 1px solid #8f8f8f;
    display: block;
}
.dot-on{
    background: radial-gradient(circle, #444 0 3px, #fff 3.6px);
}
.ui-fields{
    position: absolute;
    left: 158px;
    top: 388px;
    width: 224px;
    display: flex;
    flex-direction: column;
    gap: 15px;
}
.ui-field{
    display: flex;
    align-items: center;
    justify-content: flex-end;
    gap: 15px;
}
.ui-input{
    width: 100px;
    height: 21px;
    background: #fff;
    border: 1px solid #a5a5a5;
    text-align: right;
    padding-right: 4px;
    line-height: 19px;
}
.ui-button{
    position: absolute;
    left: 660px;
    top: 545px;
    width: 100px;
    height: 22px;
    background: #f4f4f4;
    border: 1px solid #9a9a9a;
    border-radius: 4px;
    text-align: center;
    line-height: 20px;
    color: #222;
}
.grip{
    position: absolute;
    right: 2px;
    bottom: 2px;
}

/* component browser */
.browser{
    width: 302px;
    border-right: 0;
    font: 12px "Liberation Sans", sans-serif;
}
.browser .panel-title{
    font-family: "Open Sans", "Liberation Sans", sans-serif;
}
.browser-search{
    height: 31px;
    flex: none;
    display: flex;
    align-items: flex-start;
    padding: 4px 8px 0 6px;
    border-bottom: 1px solid #d0d0d0;
}
.browser .search{
    font: 11.5px "Liberation Sans", sans-serif;
}
.tree-wrap{
    height: 234px;
    flex: none;
    display: flex;
    overflow: hidden;
    background: #f7f7f7;
    border-bottom: 1px solid #c6c6c6;
}
.tree{
    width: 284px;
    margin-top: -7px;
    flex: none;
}
.node{
    height: 22px;
    display: flex;
    align-items: center;
    gap: 5px;
    color: #444;
    white-space: nowrap;
}
.node-on{
    background: #cdcdcd;
}
.lvl0{
    padding-left: 5px;
}
.lvl1{
    padding-left: 23px;
}
.lvl2{
    padding-left: 54px;
}
.has-tw{
    padding-left: 41px;
}
.lvl3{
    padding-left: 72px;
}
.tw{
    width: 0;
    height: 0;
    border-left: 4px solid transparent;
    border-right: 4px solid transparent;
    border-top: 4px solid #333;
}
.tree-ic{
    margin: 0 0 0 3px;
}
.vscroll-tree{
    flex: 1;
}
.vscroll-tree .thumb{
    margin-top: 16px;
    height: 187px;
}
.insp-tabs{
    height: 28px;
    flex: none;
    background: #fafafa;
    display: flex;
    align-items: center;
    padding-left: 5px;
    color: #555;
}
.insp-on{
    color: #3355a5;
    font-weight: bold;
}
.insp-sep{
    width: 1px;
    height: 14px;
    margin: 0 10px;
    background: #999;
}
.insp-tools{
    height: 28px;
    flex: none;
    background: #fafafa;
    display: flex;
    align-items: flex-start;
    padding: 2px 10px 0 7px;
    border-bottom: 1px solid #ccc;
}
.insp-tools .search{
    flex: none;
    width: 220px;
    margin-right: 14px;
}
.sort-btn{
    width: 22px;
    height: 22px;
    margin-right: 5px;
    border: 1px solid #aaa;
    border-radius: 4px;
    background: #f7f7f7;
    display: flex;
    align-items: center;
    justify-content: center;
    gap: 1px;
}
.sort-btn:last-child{
    margin-right: 0;
}
.sort-on{
    background: #cfcfcf;
}
.az{
    font-size: 9px;
    line-height: 9px;
}
.props{
    flex: 1;
    min-height: 0;
    overflow: hidden;
    background: #f8f8f8;
    font-size: 11px;
}
.sect-head{
    height: 26px;
    background: #e9e9e9;
    border-bottom: 1px solid #c9c9c9;
    line-height: 25px;
    padding-left: 21px;
    font-size: 10px;
    color: #666;
    position: relative;
}
.sect-head::before{
    content: "";
    position: absolute;
    left: 11px;
    top: 9px;
    border-top: 4px solid transparent;
    border-bottom: 4px solid transparent;
    border-left: 4px solid #222;
}
.sect-head.open::before{
    left: 10px;
    top: 11px;
    border: 0 solid transparent;
    border-left-width: 4px;
    border-right-width: 4px;
    border-top: 4px solid #222;
}
.sect-body{
    background: #f1f1f1;
    padding: 3px 0 4px;
}
.prop{
    height: 25px;
    display: flex;
    align-items: center;
    padding-left: 10px;
    color: #555;
}
.prop label{
    width: 135px;
    flex: none;
    white-space: nowrap;
}
.val{
    height: 21px;
    background: #fff;
    border: 1px solid #a5a5a5;
    display: flex;
    align-items: center;
    color: #333;
}
.val-color{
    width: 90px;
    justify-content: center;
}
.color-btn{
    width: 42px;
    height: 21px;
    margin-left: 3px;
    border: 1px solid #aaa;
    border-radius: 3px;
    display: flex;
    align-items: center;
    gap: 5px;
    padding-left: 3px;
}
.swatch{
    width: 18px;
    height: 17px;
    background: #f0f0f0;
    border: 1px solid #bbb;
}
.val-drop{
    width: 135px;
    border-radius: 0 3px 3px 0;
}
.val-drop span{
    flex: 1;
    padding-left: 4px;
}
.val-drop b{
    width: 21px;
    height: 100%;
    border-left: 1px solid #aaa;
    display: flex;
    align-items: center;
    justify-content: center;
}
.val-pos{
    width: 135px;
    padding-left: 5px;
}
.dots{
    width: 11px;
    height: 21px;
    margin-left: 4px;
    border: 1px solid #999;
    border-radius: 2px;
    font: bold 13px/19px "DejaVu Sans", sans-serif;
    text-align: center;
    color: #222;
    background: #f7f7f7;
}

/* annotations lying over the window */
.note{
    position: absolute;
    font-family: "DejaVu Sans", sans-serif;
    font-size: 33px;
    line-height: 40px;
    color: #000;
    white-space: nowrap;
}
.note-menu{
    left: 958px;
    top: 79px;
}
.note-lib{
    left: 26px;
    top: 626px;
}
.note-browser{
    right: 36px;
    top: 370px;
    text-align: right;
}
.note-canvas{
    left: 813px;
    top: 746px;
}
.note-props{
    right: 17px;
    top: 708px;
    line-height: 39.500px;
    text-align: right;
}
.np1,.np2{
    padding-right: 10px;
}
```
